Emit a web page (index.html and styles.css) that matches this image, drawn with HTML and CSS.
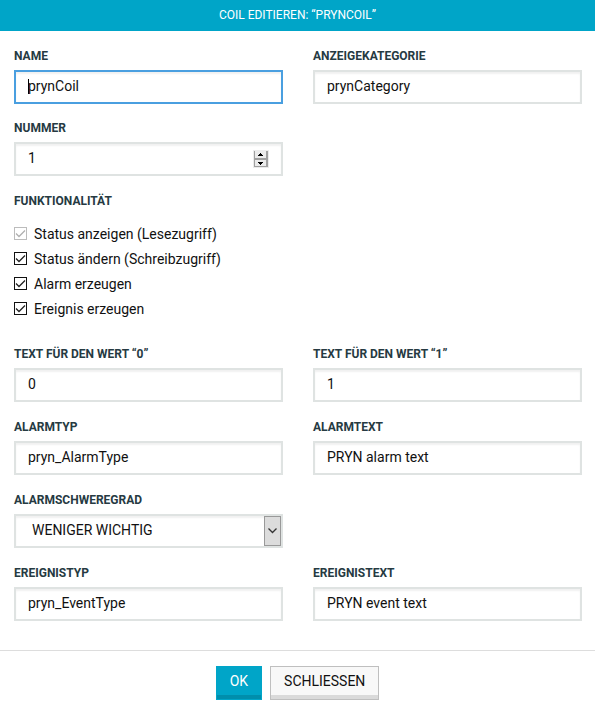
FILE: index.html
```html
<!DOCTYPE html>
<html lang="de">
<head>
<meta charset="utf-8">
<title>Coil editieren</title>
<link rel="stylesheet" href="styles.css">
</head>
<body>
<form class="dialog">
  <header class="dialog-header"><h1 class="dialog-title">COIL EDITIEREN: “PRYNCOIL”</h1></header>
  <main class="dialog-body">
    <div class="grid grid-general">
      <div class="field">
        <label class="field-label" for="name">NAME</label>
        <input class="control control-active" id="name" type="text" value="prynCoil">
      </div>
      <div class="field">
        <label class="field-label" for="category">ANZEIGEKATEGORIE</label>
        <input class="control" id="category" type="text" value="prynCategory">
      </div>
      <div class="field">
        <label class="field-label" for="number">NUMMER</label>
        <div class="control-wrap">
          <input class="control" id="number" type="number" value="1">
          <svg class="spinner" width="16" height="18" viewBox="0 0 16 18" aria-hidden="true" shape-rendering="crispEdges">
            <path fill="#ebebeb" d="M0 0h16v18H0z"/>
            <path fill="#a0a0a0" d="M1 1h1v16H1zM13 1h2v16h-2zM1 8h14v2H1zM1 16h14v1H1z"/>
            <path fill="#000" d="M7 3h1v1H7zM6 4h3v1H6zM5 5h5v1H5zM5 12h5v1H5zM6 13h3v1H6zM7 14h1v1H7z"/>
          </svg>
        </div>
      </div>
    </div>

    <fieldset class="options">
      <legend class="options-title">FUNKTIONALITÄT</legend>
      <label class="option option-disabled"><input class="check" type="checkbox" checked disabled><svg class="tick" viewBox="0 0 13 13" aria-hidden="true"><path d="M2 6.5 5 9.5 11 3.5"/></svg>Status anzeigen (Lesezugriff)</label>
      <label class="option"><input class="check" type="checkbox" checked><svg class="tick" viewBox="0 0 13 13" aria-hidden="true"><path d="M2 6.5 5 9.5 11 3.5"/></svg>Status ändern (Schreibzugriff)</label>
      <label class="option"><input class="check" type="checkbox" checked><svg class="tick" viewBox="0 0 13 13" aria-hidden="true"><path d="M2 6.5 5 9.5 11 3.5"/></svg>Alarm erzeugen</label>
      <label class="option"><input class="check" type="checkbox" checked><svg class="tick" viewBox="0 0 13 13" aria-hidden="true"><path d="M2 6.5 5 9.5 11 3.5"/></svg>Ereignis erzeugen</label>
    </fieldset>

    <div class="grid grid-texts">
      <div class="field">
        <label class="field-label" for="text0">TEXT FÜR DEN WERT “0”</label>
        <input class="control" id="text0" type="text" value="0">
      </div>
      <div class="field">
        <label class="field-label" for="text1">TEXT FÜR DEN WERT “1”</label>
        <input class="control" id="text1" type="text" value="1">
      </div>
      <div class="field">
        <label class="field-label" for="alarm-type">ALARMTYP</label>
        <input class="control" id="alarm-type" type="text" value="pryn_AlarmType">
      </div>
      <div class="field">
        <label class="field-label" for="alarm-text">ALARMTEXT</label>
        <input class="control" id="alarm-text" type="text" value="PRYN alarm text">
      </div>
      <div class="field field-left">
        <label class="field-label" for="severity">ALARMSCHWEREGRAD</label>
        <div class="control-wrap">
          <select class="control control-select" id="severity"><option>WENIGER WICHTIG</option></select>
          <span class="select-arrow" aria-hidden="true"><svg width="9" height="6" viewBox="0 0 9 6"><path d="M.5 .5 4.5 4.5 8.5 .5" fill="none" stroke="#333" stroke-width="1.3"/></svg></span>
        </div>
      </div>
      <div class="field field-left">
        <label class="field-label" for="event-type">EREIGNISTYP</label>
        <input class="control" id="event-type" type="text" value="pryn_EventType">
      </div>
      <div class="field">
        <label class="field-label" for="event-text">EREIGNISTEXT</label>
        <input class="control" id="event-text" type="text" value="PRYN event text">
      </div>
    </div>
  </main>
  <footer class="dialog-footer">
    <button class="button button-primary" type="submit">OK</button>
    <button class="button" type="button">SCHLIESSEN</button>
  </footer>
</form>
</body>
</html>
```
FILE: styles.css
```css
* { box-sizing: border-box; }

body {
  margin: 0;
  background: #fff;
  color: #111;
  font: 14px/20px Roboto, "Liberation Sans", sans-serif;
}

.dialog-header {
  background: #00a5c8;
  color: #fff;
  text-align: center;
}

.dialog-title {
  margin: 0;
  font-size: 12px;
  font-weight: 400;
  line-height: 31px;
}

.dialog-body { padding: 17px 13px 29px 14px; }

.grid {
  display: grid;
  grid-template-columns: 1fr 1fr;
  column-gap: 30px;
}

.grid-general { row-gap: 16px; }
.grid-texts { row-gap: 17px; margin-top: 25px; }
.field { min-width: 0; }
.field-left { grid-column: 1; }

.field-label,
.options-title {
  display: block;
  color: #263a42;
  font-size: 12px;
  font-weight: 700;
  line-height: 16px;
}

.field-label { margin-bottom: 6px; }

.control {
  display: block;
  width: 100%;
  height: 34px;
  margin: 0;
  padding: 0 12px 2px;
  border: 2px solid #dfe3e2;
  border-radius: 0;
  outline: 0;
  background-color: #fff;
  box-shadow: inset 0 2px 2px #f1f1f1;
  color: #111;
  font: inherit;
  appearance: none;
}

.control-active {
  border-color: #4a9fe0;
  background: #fff linear-gradient(#000, #000) 12px 7px / 1px 15px no-repeat;
}

.control[type="number"] { appearance: textfield; }
.control::-webkit-inner-spin-button { appearance: none; margin: 0; }
.control-wrap { position: relative; }

.spinner {
  position: absolute;
  top: 8px;
  right: 14px;
}

.control-select { padding-left: 16px; }

.select-arrow {
  position: absolute;
  top: 2px;
  right: 2px;
  bottom: 2px;
  display: flex;
  align-items: center;
  justify-content: center;
  width: 17px;
  border: 1px solid #999;
  background: #dcdcdc;
  pointer-events: none;
}

.options {
  margin: 17px 0 0;
  padding: 0;
  border: 0;
}

.options-title { padding: 0; margin-bottom: 12px; }

.option {
  position: relative;
  display: flex;
  align-items: center;
  gap: 7px;
  height: 25px;
}

.check {
  width: 13px;
  height: 13px;
  margin: 0;
  border: 1px solid #111;
  background: #fff;
  appearance: none;
}

.tick {
  position: absolute;
  left: 0;
  width: 13px;
  height: 13px;
  fill: none;
  stroke: #222;
  stroke-width: 1.3;
  pointer-events: none;
}

.check:not(:checked) + .tick { display: none; }
.option-disabled .check { border-color: #bcbcbc; }
.option-disabled .tick { stroke: #b0b0b0; }

.dialog-footer {
  display: flex;
  justify-content: center;
  gap: 8px;
  padding: 15px 0;
  border-top: 1px solid #ddd;
}

.button {
  height: 34px;
  padding: 0 13px 4px;
  border: 1px solid #bfbfbf;
  background: #f8f8f8;
  box-shadow: inset 0 -4px #dadada;
  color: #111;
  font: inherit;
}

.button-primary {
  border-color: #00a5c8;
  background: #00a5c8;
  box-shadow: inset 0 -4px #008eac;
  color: #fff;
}
```
